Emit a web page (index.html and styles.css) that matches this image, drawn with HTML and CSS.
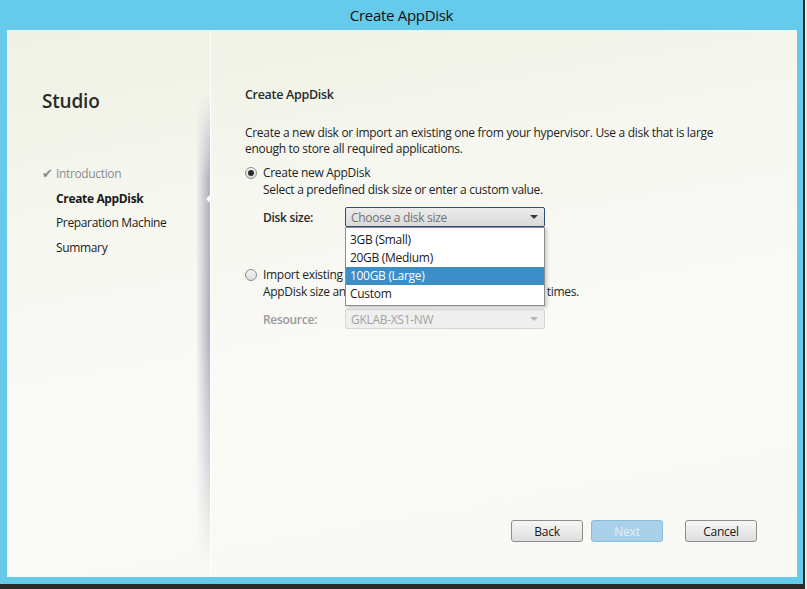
FILE: index.html
```html
<!DOCTYPE html>
<html lang="en">
<head>
    <meta charset="UTF-8">
    <title>Create AppDisk</title>
    <link rel="stylesheet" href="styles.css">
</head>
<body>
    <div class="window">
        <div class="title-bar">Create AppDisk</div>

        <div class="wizard">
            <aside class="sidebar">
                <h1 class="brand">Studio</h1>
                <ul class="steps">
                    <li class="step step--done"><span class="check">&#10004;</span>Introduction</li>
                    <li class="step step--active">Create AppDisk</li>
                    <li class="step">Preparation Machine</li>
                    <li class="step">Summary</li>
                </ul>
            </aside>

            <main class="page">
                <h2 class="page-title">Create AppDisk</h2>
                <p class="intro">Create a new disk or import an existing one from your hypervisor. Use a disk that is large enough to store all required applications.</p>

                <div class="option">
                    <span class="radio radio--checked"></span>
                    <span>Create new AppDisk</span>
                </div>
                <p class="hint">Select a predefined disk size or enter a custom value.</p>

                <div class="field">
                    <label class="field-label">Disk size:</label>
                    <div class="combo-wrap">
                        <div class="combo combo--focus">
                            <span>Choose a disk size</span>
                            <span class="arrow"></span>
                        </div>
                        <ul class="combo-list">
                            <li>3GB (Small)</li>
                            <li>20GB (Medium)</li>
                            <li class="selected">100GB (Large)</li>
                            <li>Custom</li>
                        </ul>
                    </div>
                </div>

                <div class="option option--second">
                    <span class="radio"></span>
                    <span>Import existing AppDisk</span>
                </div>
                <p class="hint">AppDisk size and location are then fixed at all the run times.</p>

                <div class="field">
                    <label class="field-label field-label--disabled">Resource:</label>
                    <div class="combo combo--disabled">
                        <span>GKLAB-XS1-NW</span>
                        <span class="arrow"></span>
                    </div>
                </div>

                <div class="actions">
                    <button class="btn">Back</button>
                    <button class="btn btn--primary" disabled>Next</button>
                    <button class="btn btn--cancel">Cancel</button>
                </div>
            </main>
        </div>
    </div>
</body>
</html>
```

FILE: styles.css
```css
* {
    margin: 0;
    padding: 0;
    box-sizing: border-box;
}

body {
    font-family: 'Open Sans', 'Noto Sans', sans-serif;
    font-size: 12px;
    color: #1e1e1e;
    background-color: #e9e9e9;
    width: 807px;
    height: 589px;
    overflow: hidden;
}

/* window frame */
.window {
    width: 805px;
    height: 589px;
    background-color: #66cbea;
    border-right: 2px solid #2e2e2e;
    border-bottom: 5px solid #2a2a2a;
    display: flex;
    flex-direction: column;
}

.title-bar {
    height: 30px;
    line-height: 31px;
    text-align: center;
    font-size: 15px;
    color: #111;
    letter-spacing: -0.3px;
}

.wizard {
    height: 547px;
    margin: 0 6px 0 7px;
    display: flex;
    background: linear-gradient(170deg, #eef1e3 0%, #f6f7f0 30%, #fafaf7 60%, #f8f9f4 100%);
}

/* left side */
.sidebar {
    width: 203px;
    padding: 58px 0 0 35px;
    position: relative;
}

.sidebar::after {
    content: '';
    position: absolute;
    top: 65px;
    bottom: 12px;
    right: 0;
    width: 14px;
    background: linear-gradient(90deg, rgba(205, 206, 214, 0) 0%, rgba(172, 174, 188, 1) 100%);
    -webkit-mask-image: linear-gradient(180deg, transparent 0%, #000 18%, #000 50%, rgba(0,0,0,0.5) 78%, transparent 100%);
    mask-image: linear-gradient(180deg, transparent 0%, #000 18%, #000 50%, rgba(0,0,0,0.5) 78%, transparent 100%);
}

.brand {
    font-size: 19px;
    font-weight: 600;
    color: #2a2a2a;
    line-height: 26px;
    letter-spacing: -0.2px;
}

.steps {
    list-style: none;
    margin-top: 47px;
}

.step {
    padding-left: 14px;
    line-height: 24.6px;
    color: #1a1a1a;
    letter-spacing: -0.35px;
    position: relative;
}

.check {
    display: inline-block;
    width: 14px;
    margin-left: -14px;
    color: #8a8a8a;
    font-size: 13px;
}

.step--done {
    color: #8c8c8c;
}

.step--active {
    font-weight: 700;
}

/* small notch pointing to the active step */
.step--active::after {
    content: '';
    position: absolute;
    right: -1px;
    top: 7px;
    border-top: 5px solid transparent;
    border-bottom: 5px solid transparent;
    border-right: 5px solid #ffffff;
    z-index: 2;
}

/* right side */
.page {
    flex: 1;
    padding: 56px 40px 35px 34px;
    display: flex;
    flex-direction: column;
    border-left: 1px solid #ffffff;
    letter-spacing: -0.3px;
}

.page-title {
    font-size: 12.5px;
    font-weight: 600;
    color: #2a2a2a;
    line-height: 18px;
}

.intro {
    margin-top: 21px;
    line-height: 16px;
    width: 500px;
}

.option {
    display: flex;
    align-items: center;
    gap: 6px;
    margin-top: 8px;
    line-height: 16px;
}

.option--second {
    margin-top: 40px;
}

.radio {
    width: 12px;
    height: 12px;
    border-radius: 50%;
    border: 1px solid #8d8d8d;
    background: linear-gradient(180deg, #f4f4f4, #dcdcdc);
    display: flex;
    align-items: center;
    justify-content: center;
}

.radio--checked::after {
    content: '';
    width: 6px;
    height: 6px;
    border-radius: 50%;
    background: #2b2b2b;
}

.hint {
    padding-left: 18px;
    line-height: 16px;
    margin-top: 1px;
}

.field {
    display: flex;
    align-items: center;
    margin-top: 9px;
    padding-left: 18px;
}

.field-label {
    width: 82px;
    font-weight: 600;
    color: #2a2a2a;
}

.field-label--disabled {
    color: #9a9a9a;
}

.combo-wrap {
    position: relative;
}

.combo {
    width: 200px;
    height: 20px;
    padding: 0 5px;
    display: flex;
    align-items: center;
    justify-content: space-between;
    border: 1px solid #acacac;
    border-radius: 2px;
}

.combo--focus {
    border-color: #2d4f75;
    background: linear-gradient(180deg, #ececec, #dadada);
    color: #727272;
}

.combo--disabled {
    border-color: #d6d6d6;
    background: #efefef;
    color: #a3a3a3;
}

.arrow {
    width: 0;
    height: 0;
    margin-right: 1px;
    border-left: 4px solid transparent;
    border-right: 4px solid transparent;
    border-top: 4px solid #3a3a3a;
}

.combo--disabled .arrow {
    border-top-color: #b5b5b5;
}

/* open dropdown */
.combo-list {
    list-style: none;
    position: absolute;
    top: 20px;
    left: 0;
    width: 200px;
    padding: 3px 0 2px;
    background: #ffffff;
    border: 1px solid #8f8f8f;
    box-shadow: 2px 2px 3px rgba(0, 0, 0, 0.18);
    z-index: 5;
}

.combo-list li {
    height: 18px;
    line-height: 18px;
    padding-left: 4px;
    color: #1a1a1a;
}

.combo-list li.selected {
    background-color: #3b8ec8;
    color: #ffffff;
}

/* buttons */
.actions {
    margin-top: auto;
    display: flex;
    justify-content: flex-end;
}

.btn {
    width: 72px;
    height: 22px;
    font-family: inherit;
    font-size: 12px;
    color: #1a1a1a;
    border: 1px solid #8e8e8e;
    border-radius: 3px;
    background: linear-gradient(180deg, #f7f7f7, #dedede);
    letter-spacing: -0.25px;
}

.btn + .btn {
    margin-left: 8px;
}

.btn--primary {
    background: #a9d1e9;
    border-color: #8cbbd8;
    color: #e3f0f8;
}

.btn--cancel {
    margin-left: 22px !important;
}
```
